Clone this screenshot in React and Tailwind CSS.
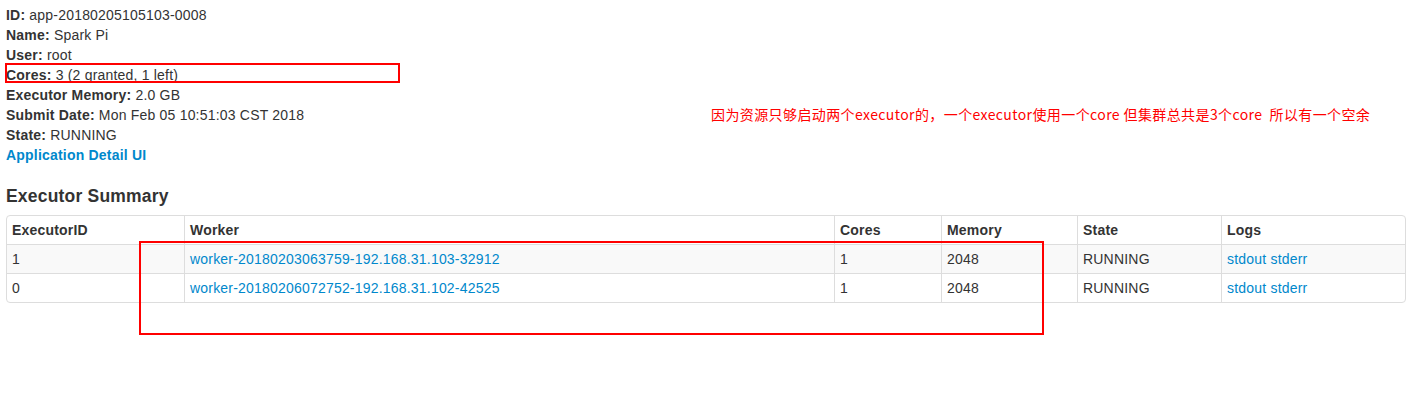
import React from 'react'

const info = [
  ['ID:', 'app-20180205105103-0008'],
  ['Name:', 'Spark Pi'],
  ['User:', 'root'],
  ['Cores:', '3 (2 granted, 1 left)'],
  ['Executor Memory:', '2.0 GB'],
  ['Submit Date:', 'Mon Feb 05 10:51:03 CST 2018'],
  ['State:', 'RUNNING'],
]

const rows = [
  { id: '1', worker: 'worker-20180203063759-192.168.31.103-32912', cores: '1', mem: '2048', state: 'RUNNING' },
  { id: '0', worker: 'worker-20180206072752-192.168.31.102-42525', cores: '1', mem: '2048', state: 'RUNNING' },
]

export default function App() {
  return (
    <div className="relative w-[1407px] h-[403px] bg-white text-[14px] leading-[20px] tracking-[0.2px] text-[#333] px-[6px] pt-[5px]" style={{ fontFamily: '"Liberation Sans", Arial, sans-serif' }}>
      <ul>
        {info.map(([k, v]) => (
          <li key={k}>
            <strong className="font-bold">{k}</strong> {v}
          </li>
        ))}
        <li>
          <a className="font-bold text-[#0088cc]">Application Detail UI</a>
        </li>
      </ul>

      <h4 className="text-[17.5px] font-bold leading-[20px] mt-[21px] mb-[9px]">Executor Summary</h4>

      <table className="table-fixed w-[1400px] border-separate border-spacing-0 border border-[#ddd] rounded-[4px]">
        <thead>
          <tr className="text-left">
            <th className="w-[177px] px-[5px] py-[4px] font-bold">ExecutorID</th>
            <th className="w-[650px] px-[5px] py-[4px] font-bold border-l border-[#ddd]">Worker</th>
            <th className="w-[107px] px-[5px] py-[4px] font-bold border-l border-[#ddd]">Cores</th>
            <th className="w-[136px] px-[5px] py-[4px] font-bold border-l border-[#ddd]">Memory</th>
            <th className="w-[144px] px-[5px] py-[4px] font-bold border-l border-[#ddd]">State</th>
            <th className="px-[5px] py-[4px] font-bold border-l border-[#ddd]">Logs</th>
          </tr>
        </thead>
        <tbody>
          {rows.map((r, i) => (
            <tr key={r.id} className={i === 0 ? 'bg-[#f9f9f9]' : ''}>
              <td className="px-[5px] py-[4px] border-t border-[#ddd]">{r.id}</td>
              <td className="px-[5px] py-[4px] border-t border-l border-[#ddd]">
                <a className="text-[#0088cc]">{r.worker}</a>
              </td>
              <td className="px-[5px] py-[4px] border-t border-l border-[#ddd]">{r.cores}</td>
              <td className="px-[5px] py-[4px] border-t border-l border-[#ddd]">{r.mem}</td>
              <td className="px-[5px] py-[4px] border-t border-l border-[#ddd]">{r.state}</td>
              <td className="px-[5px] py-[4px] border-t border-l border-[#ddd]">
                <a className="text-[#0088cc]">stdout</a> <a className="text-[#0088cc]">stderr</a>
              </td>
            </tr>
          ))}
        </tbody>
      </table>

      {/* annotations drawn over the page */}
      <div className="absolute left-[5px] top-[63px] w-[395px] h-[20px] border-2 border-[#ff0000]" />
      <div className="absolute left-[139px] top-[241px] w-[905px] h-[94px] border-2 border-[#ff0000]" />
      <div className="absolute left-[711px] top-[104px] text-[14px] leading-[20px] tracking-[0.4px] text-[#ff0000] whitespace-pre" style={{ fontFamily: '"Noto Sans CJK SC", "Liberation Sans", sans-serif' }}>
        因为资源只够启动两个executor的，一个executor使用一个core 但集群总共是3个core  所以有一个空余
      </div>
    </div>
  )
}
